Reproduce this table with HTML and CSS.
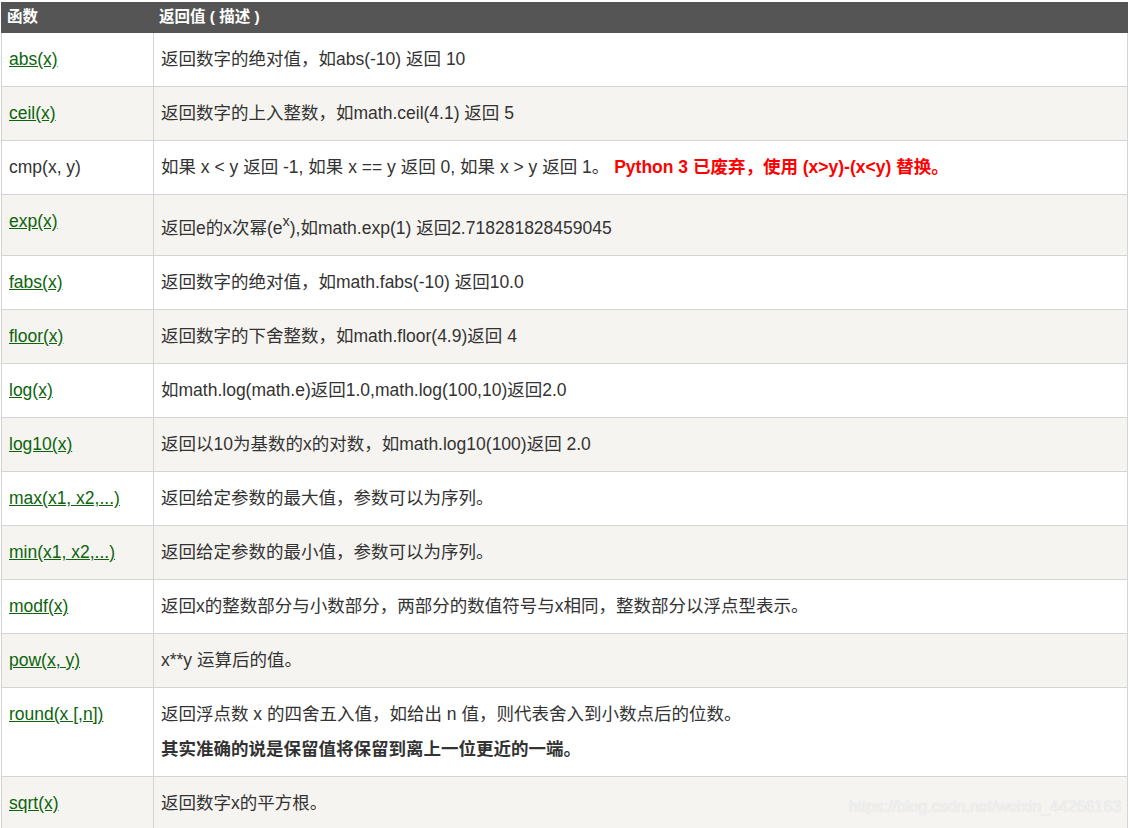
FILE: index.html
```html
<!DOCTYPE html>
<html lang="zh">
<head>
<meta charset="utf-8">
<title>Python 数学函数</title>
<link rel="stylesheet" href="styles.css">
</head>
<body>
<table class="reference">
  <colgroup>
    <col class="col-fn">
    <col class="col-desc">
  </colgroup>
  <thead>
    <tr><th>函数</th><th>返回值 ( 描述 )</th></tr>
  </thead>
  <tbody>
    <tr><td><a href="#">abs(x)</a></td><td>返回数字的绝对值，如abs(-10) 返回 10</td></tr>
    <tr><td><a href="#">ceil(x)</a></td><td>返回数字的上入整数，如math.ceil(4.1) 返回 5</td></tr>
    <tr><td>cmp(x, y)</td><td>如果 x &lt; y 返回 -1, 如果 x == y 返回 0, 如果 x &gt; y 返回 1。 <span class="warn">Python 3 已废弃，使用 (x&gt;y)-(x&lt;y) 替换。</span></td></tr>
    <tr><td><a href="#">exp(x)</a></td><td class="desc-sup">返回e的x次幂(e<sup>x</sup>),如math.exp(1) 返回2.718281828459045</td></tr>
    <tr><td><a href="#">fabs(x)</a></td><td>返回数字的绝对值，如math.fabs(-10) 返回10.0</td></tr>
    <tr><td><a href="#">floor(x)</a></td><td>返回数字的下舍整数，如math.floor(4.9)返回 4</td></tr>
    <tr><td><a href="#">log(x)</a></td><td>如math.log(math.e)返回1.0,math.log(100,10)返回2.0</td></tr>
    <tr><td><a href="#">log10(x)</a></td><td>返回以10为基数的x的对数，如math.log10(100)返回 2.0</td></tr>
    <tr><td><a href="#">max(x1, x2,...)</a></td><td>返回给定参数的最大值，参数可以为序列。</td></tr>
    <tr><td><a href="#">min(x1, x2,...)</a></td><td>返回给定参数的最小值，参数可以为序列。</td></tr>
    <tr><td><a href="#">modf(x)</a></td><td>返回x的整数部分与小数部分，两部分的数值符号与x相同，整数部分以浮点型表示。</td></tr>
    <tr><td><a href="#">pow(x, y)</a></td><td>x**y 运算后的值。</td></tr>
    <tr><td><a href="#">round(x [,n])</a></td><td>返回浮点数 x 的四舍五入值，如给出 n 值，则代表舍入到小数点后的位数。<br><b>其实准确的说是保留值将保留到离上一位更近的一端。</b></td></tr>
    <tr><td><a href="#">sqrt(x)</a></td><td>返回数字x的平方根。</td></tr>
  </tbody>
</table>
<div class="watermark">https://blog.csdn.net/weixin_44266163</div>
</body>
</html>
```

FILE: styles.css
```css
html, body {
  margin: 0;
  padding: 0;
  overflow: hidden;
  background: #fff;
}

body {
  position: relative;
  height: 828px;
  font-family: "Liberation Sans", Arial, "Noto Sans CJK SC", sans-serif;
  color: #333;
}

.reference {
  margin: 2px 0 0 1px;
  width: 1127px;
  border-collapse: collapse;
  table-layout: fixed;
}

.col-fn {
  width: 152px;
}

.reference th {
  background: #555;
  color: #fff;
  font-size: 15.5px;
  font-weight: bold;
  text-align: left;
  line-height: 30px;
  height: 30px;
  padding: 0 5px;
  border: 1px solid #555;
  border-top: 0;
}

.reference td {
  font-size: 17.5px;
  line-height: 35px;
  padding: 9px 7px;
  border: 1px solid #d4d4d4;
  vertical-align: top;
}

.reference tbody tr:nth-child(even) td {
  background: #f6f4f0;
}

.reference a {
  color: #0d640d;
  text-decoration: underline;
}

.reference sup {
  font-size: 0.82em;
  line-height: 1;
  vertical-align: 0.55em;
}

.reference .desc-sup {
  padding-top: 16px;
}

.warn {
  color: #f00;
  font-weight: bold;
}

.watermark {
  position: absolute;
  left: 849px;
  top: 798px;
  font-size: 16px;
  color: #f2f2f2;
  text-shadow: 0 0 1px #cfcfcf;
  font-family: "Liberation Sans", Arial, sans-serif;
  pointer-events: none;
}
```
